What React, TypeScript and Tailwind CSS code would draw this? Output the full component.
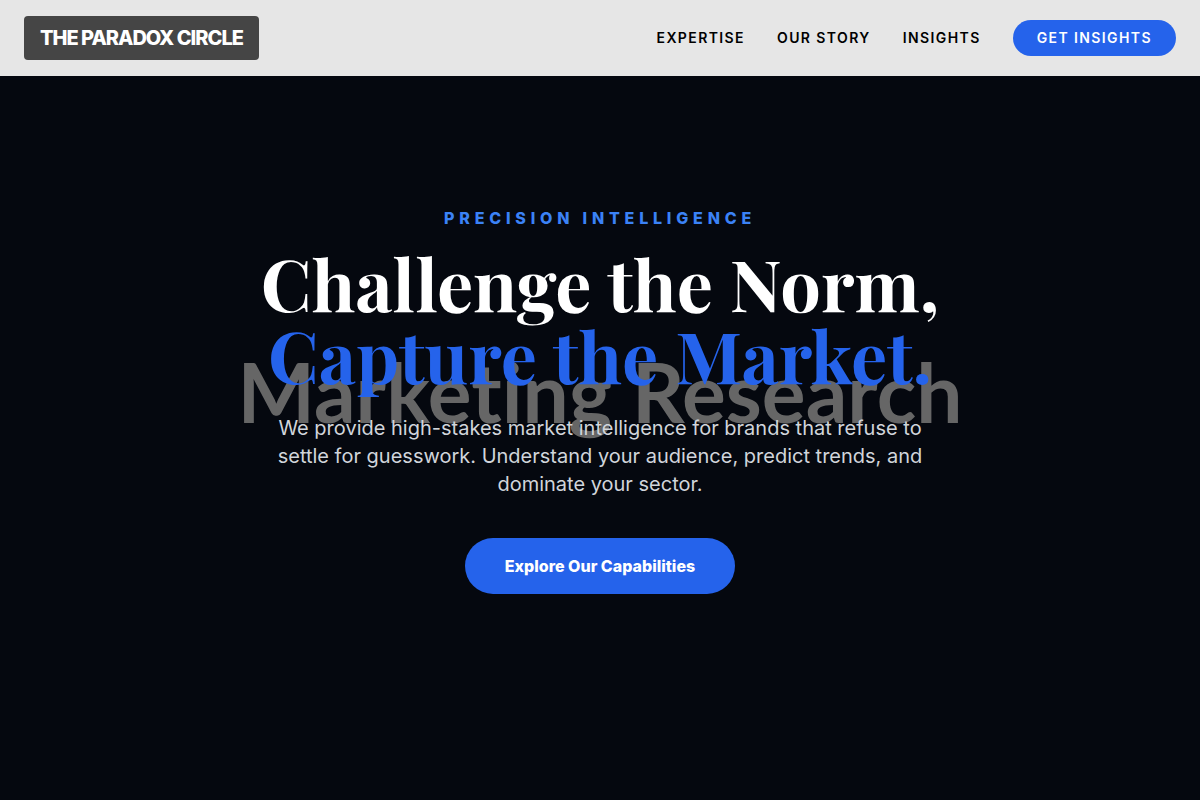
import React from "react";

interface INavLinkProps {
    text: string;
    href: string;
}

function NavLink(props: INavLinkProps) {
    return (
        <a href={props.href} className="hidden md:block text-black hover:text-[#2563eb]">
            {props.text}
        </a>
    );
}

const Header: React.FC = () => {
    return (
        <header className="fixed top-0 inset-x-0 z-20 bg-[#e6e6e6]">
            <div className="flex items-center justify-between px-6 py-4">
                <a
                    href="#"
                    className="bg-[#454545] text-white text-xl font-extrabold tracking-tighter px-4 py-2 rounded-sm"
                >
                    THE PARADOX CIRCLE
                </a>
                <nav className="flex items-center gap-8 text-sm font-semibold uppercase tracking-widest">
                    <NavLink text="Expertise" href="#expertise" />
                    <NavLink text="Our Story" href="#story" />
                    <NavLink text="Insights" href="#insights" />
                    <a
                        href="#contact"
                        className="bg-[#2563eb] hover:bg-[#1d4ed8] text-white px-6 py-2 rounded-full"
                    >
                        Get Insights
                    </a>
                </nav>
            </div>
        </header>
    );
};

const Hero: React.FC = () => {
    return (
        <section className="relative min-h-screen flex items-center justify-center bg-[#05080f] overflow-hidden">
            {/* Backdrop lettering */}
            <div
                aria-hidden="true"
                className="absolute inset-0 pb-[18px] flex items-center justify-center text-center font-['Lato',sans-serif] font-bold text-[82px] leading-none text-[#666666] [font-variant-ligatures:none]"
            >
                Marketing Research
            </div>
            <div className="relative z-10 max-w-4xl px-6 text-center">
                <p className="mb-4 text-base font-extrabold uppercase tracking-[0.3em] text-[#3b82f6]">
                    Precision Intelligence
                </p>
                <h1 className="mb-6 font-['Playfair_Display','Liberation_Serif',serif] font-bold text-7xl leading-none text-white">
                    Challenge the Norm,
                    <br />
                    <span className="text-[#2563eb]">Capture the Market.</span>
                </h1>
                <p className="mb-10 mx-auto max-w-2xl text-xl text-[#d1d5db]">
                    We provide high-stakes market intelligence for brands that refuse to settle
                    for guesswork. Understand your audience, predict trends, and dominate your
                    sector.
                </p>
                <button className="bg-[#2563eb] hover:bg-[#1d4ed8] text-white font-extrabold px-10 py-4 rounded-full">
                    Explore Our Capabilities
                </button>
            </div>
        </section>
    );
};

function App() {
    return (
        <div className="font-['Inter',sans-serif]">
            <Header />
            <main>
                <Hero />
            </main>
        </div>
    );
}

export default App;
